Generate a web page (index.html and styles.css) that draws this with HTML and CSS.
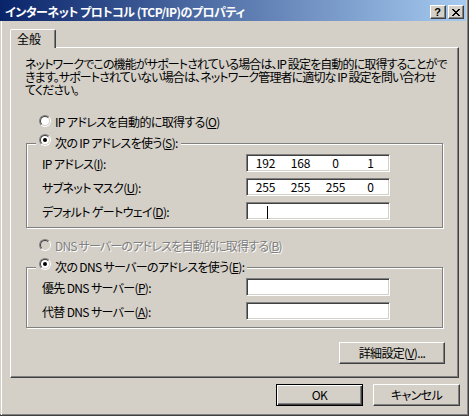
FILE: index.html
```html
<!DOCTYPE html>
<html lang="ja">
<head>
<meta charset="utf-8">
<title>インターネット プロトコル (TCP/IP)のプロパティ</title>
<link rel="stylesheet" href="styles.css">
</head>
<body>
<div class="window">
  <div class="titlebar">
    <span class="title">インターネット プロトコル (TCP/IP)のプロパティ</span>
    <div class="caption-buttons">
      <span class="cap-btn help">?</span>
      <span class="cap-btn close">
        <svg width="8" height="7" viewBox="0 0 8 7" shape-rendering="crispEdges">
          <rect x="0" y="0" width="2" height="1"/><rect x="6" y="0" width="2" height="1"/>
          <rect x="1" y="1" width="2" height="1"/><rect x="5" y="1" width="2" height="1"/>
          <rect x="2" y="2" width="4" height="1"/>
          <rect x="3" y="3" width="2" height="1"/>
          <rect x="2" y="4" width="4" height="1"/>
          <rect x="1" y="5" width="2" height="1"/><rect x="5" y="5" width="2" height="1"/>
          <rect x="0" y="6" width="2" height="1"/><rect x="6" y="6" width="2" height="1"/>
        </svg>
      </span>
    </div>
  </div>
  <div class="client">
    <div class="tabs"><div class="tab">全般</div></div>
    <div class="page">
      <p class="desc">ネットワークでこの機能がサポートされている場合は、IP 設定を自動的に取得することがで<br>きます。サポートされていない場合は、ネットワーク管理者に適切な IP 設定を問い合わせ<br>てください。</p>

      <div class="option"><span class="radio"><span class="radio-in"></span></span><span>IP アドレスを自動的に取得する(<u>O</u>)</span></div>
      <fieldset class="group">
        <legend class="option"><span class="radio"><span class="radio-in"><span class="dot"></span></span></span><span>次の IP アドレスを使う(<u>S</u>):</span></legend>
        <div class="form">
          <span class="label">IP アドレス(<u>I</u>):</span>
          <div class="edit ip"><span>192</span><span>168</span><span>0</span><span>1</span></div>
          <span class="label">サブネット マスク(<u>U</u>):</span>
          <div class="edit ip"><span>255</span><span>255</span><span>255</span><span>0</span></div>
          <span class="label">デフォルト ゲートウェイ(<u>D</u>):</span>
          <div class="edit ip"><span><i class="caret"></i></span><span></span><span></span><span></span></div>
        </div>
      </fieldset>

      <div class="option disabled"><span class="radio"><span class="radio-in"></span></span><span>DNS サーバーのアドレスを自動的に取得する(<u>B</u>)</span></div>
      <fieldset class="group">
        <legend class="option"><span class="radio"><span class="radio-in"><span class="dot"></span></span></span><span>次の DNS サーバーのアドレスを使う(<u>E</u>):</span></legend>
        <div class="form">
          <span class="label">優先 DNS サーバー(<u>P</u>):</span>
          <div class="edit"></div>
          <span class="label">代替 DNS サーバー(<u>A</u>):</span>
          <div class="edit"></div>
        </div>
      </fieldset>

      <button class="btn advanced">詳細設定(<u>V</u>)...</button>
    </div>
    <div class="footer">
      <button class="btn default">OK</button>
      <button class="btn">キャンセル</button>
    </div>
  </div>
</div>
</body>
</html>
```
FILE: styles.css
```css
* { box-sizing: border-box; }
html, body { margin: 0; padding: 0; }
body {
  width: 469px;
  height: 416px;
  overflow: hidden;
  font-family: "Noto Sans CJK JP", "Noto Sans", sans-serif;
  font-size: 12px;
  font-feature-settings: "palt";
  letter-spacing: -0.65px;
  color: #000;
  background: #D4D0C8;
}
.window {
  width: 469px;
  height: 416px;
  background: #D4D0C8;
  border-right: 1px solid #404040;
  border-bottom: 1px solid #404040;
  box-shadow: inset -1px -1px 0 #808080;
  display: flex;
  flex-direction: column;
}
.titlebar {
  height: 21px;
  width: 466px;
  background: linear-gradient(to right, #0A246A, #A6CAF0);
  display: flex;
  align-items: center;
  padding: 2px 2px 0 5px;
}
.title {
  flex: 1;
  color: #fff;
  font-weight: bold;
  font-size: 12px;
  letter-spacing: -0.5px;
  line-height: 14px;
  white-space: nowrap;
}
.caption-buttons {
  display: flex;
  gap: 2px;
  align-self: flex-start;
  margin-top: 3px;
}
.cap-btn {
  width: 16px;
  height: 14px;
  background: #D4D0C8;
  border: 1px solid;
  border-color: #fff #404040 #404040 #fff;
  box-shadow: inset -1px -1px 0 #808080;
  display: flex;
  align-items: center;
  justify-content: center;
  letter-spacing: 0;
}
.cap-btn.help {
  font-family: "Liberation Sans", sans-serif;
  font-weight: bold;
  font-size: 11px;
  line-height: 12px;
  padding-right: 1px;
}
.cap-btn.close svg { fill: #000; margin-right: 1px; }
.client {
  flex: 1;
  margin-left: 1px;
  border-left: 1px solid #fff;
  padding-left: 8px;
  display: flex;
  flex-direction: column;
}
.tabs {
  display: flex;
  margin-top: 8px;
}
.tab {
  position: relative;
  z-index: 1;
  width: 46px;
  height: 19px;
  margin-bottom: -1px;
  background: #D4D0C8;
  border-top: 1px solid #fff;
  border-left: 1px solid #fff;
  border-right: 1px solid #404040;
  border-radius: 2px 2px 0 0;
  box-shadow: inset -1px 0 0 #808080;
  padding-left: 6px;
  line-height: 17px;
  letter-spacing: 0;
}
.page {
  width: 449px;
  border: 1px solid;
  border-color: #fff #404040 #404040 #fff;
  box-shadow: inset -1px -1px 0 #808080;
  padding: 9px 15px 13px 15px;
  display: flex;
  flex-direction: column;
}
.desc {
  margin: 0 0 0 -1px;
  line-height: 13px;
  letter-spacing: -0.88px;
  white-space: nowrap;
}
.option {
  display: flex;
  align-items: center;
  gap: 4px;
  height: 16px;
  white-space: nowrap;
}
.page > .option {
  margin-left: 13px;
  margin-top: 17px;
}
.page > .option.disabled { margin-top: 9px; }
.disabled { color: #808080; text-shadow: 1px 1px 0 #fff; letter-spacing: -0.8px; }
.radio {
  width: 12px;
  height: 12px;
  flex: none;
  border-radius: 50%;
  border: 1px solid;
  border-color: #808080 #fff #fff #808080;
}
.radio-in {
  display: flex;
  align-items: center;
  justify-content: center;
  width: 10px;
  height: 10px;
  border-radius: 50%;
  border: 1px solid;
  border-color: #404040 #D4D0C8 #D4D0C8 #404040;
  background: #fff;
}
.disabled .radio-in { background: #D4D0C8; }
.dot {
  width: 4px;
  height: 4px;
  border-radius: 50%;
  background: #000;
}
.group {
  margin: 3px 0 0 0;
  padding: 0 0 7px 9px;
  min-inline-size: 0;
  border: 1px solid #808080;
  box-shadow: inset 1px 1px 0 #fff, 1px 1px 0 #fff;
}
.group legend.option {
  padding: 2px 3px 6px 3px;
  height: 22px;
  background: #D4D0C8;
  align-items: flex-start;
}
.form {
  display: grid;
  grid-template-columns: 1fr 144px;
  row-gap: 6px;
  align-items: center;
  padding-left: 6px;
  padding-right: 52px;
}
.label { white-space: nowrap; }
.edit {
  height: 18px;
  background: #fff;
  border: 1px solid;
  border-color: #808080 #fff #fff #808080;
  box-shadow: inset 1px 1px 0 #404040, inset -1px -1px 0 #D4D0C8;
}
.ip {
  display: flex;
  padding: 1px;
  line-height: 14px;
  letter-spacing: -0.2px;
}
.ip span {
  flex: 1;
  text-align: center;
}
.caret {
  display: inline-block;
  width: 1px;
  height: 13px;
  background: #000;
  vertical-align: middle;
  margin-left: 4px;
}
.btn {
  font: inherit;
  letter-spacing: inherit;
  color: #000;
  background: #D4D0C8;
  border: 1px solid;
  border-color: #fff #404040 #404040 #fff;
  box-shadow: inset -1px -1px 0 #808080;
  height: 22px;
  padding: 0;
  line-height: 18px;
  white-space: nowrap;
}
.btn u { text-decoration: underline; }
.advanced {
  align-self: flex-end;
  width: 106px;
  margin-top: 14px;
  margin-right: -2px;
}
.footer {
  display: flex;
  justify-content: flex-end;
  gap: 10px;
  margin-top: 6px;
  padding-right: 8px;
}
.footer .btn { width: 87px; }
.btn.default {
  border: 1px solid #000;
  box-shadow: inset 1px 1px 0 #fff, inset -1px -1px 0 #404040, inset -2px -2px 0 #808080;
}
```
